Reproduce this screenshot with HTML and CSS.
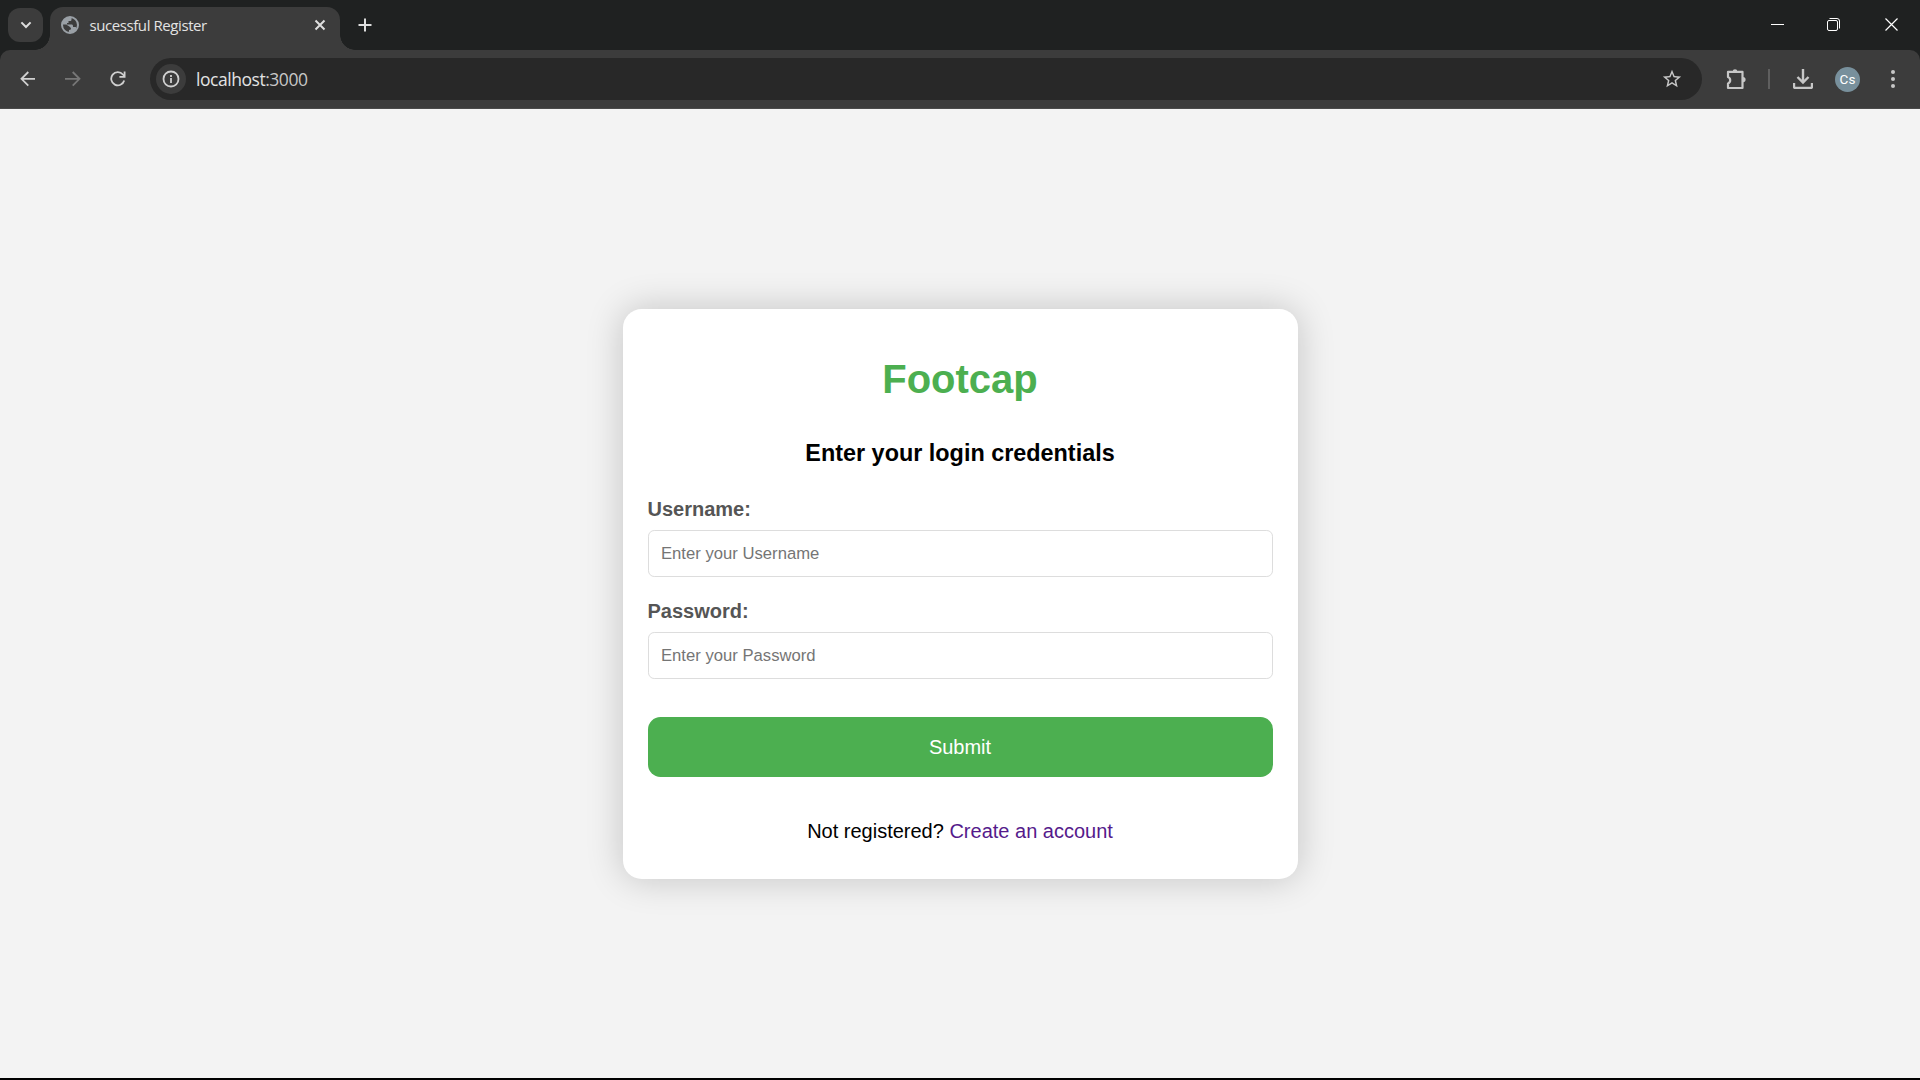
FILE: index.html
```html
<!DOCTYPE html>
<html lang="en">
<head>
<meta charset="utf-8">
<title>sucessful Register</title>
<link rel="stylesheet" href="styles.css">
</head>
<body>
<header class="browser">
  <div class="tabstrip">
    <div class="tab-search"><svg width="12" height="8" viewBox="0 0 12 8"><path d="M1.400 1.400 6 6l4.600-4.600" class="line bold"/></svg></div>
    <div class="tab">
      <svg class="globe" width="18" height="18" viewBox="0 0 18 18"><circle cx="9" cy="9" r="8" fill="none" stroke="#9aa0a6" stroke-width="2"/><path fill="#9aa0a6" d="M1 8.500C1.500 4 5 1 9 1h1.500v2.500c0 1-.7 1.500-1.500 1.500H7.500v2H6v1.500h4.500c1 0 1.500.7 1.500 1.500v1h2c1 0 1.500.6 1.700 1.500L13 16l-5 1v-3c2 0 2.500-1 1.500-2.500-1-1.300-2.500-1.500-4-3z"/></svg>
      <span class="tab-title">sucessful Register</span>
      <svg class="tab-close" width="12" height="12" viewBox="0 0 12 12"><path d="m1.500 1.500 9 9m0-9-9 9" class="line bold"/></svg>
    </div>
    <svg class="new-tab" width="14" height="14" viewBox="0 0 14 14"><path d="M7 .5v13M.5 7h13" class="line bold"/></svg>
    <div class="window-controls">
      <svg width="13" height="14" viewBox="0 0 13 14"><path d="M0 6.500h13" stroke="#fff"/></svg>
      <svg width="13" height="13" viewBox="0 0 13 13"><rect x=".5" y="2.500" width="10" height="10" rx="1.500" fill="none" stroke="#fff"/><path d="M2.500.5H10a2.500 2.500 0 0 1 2.500 2.500v7.500" fill="none" stroke="#fff"/></svg>
      <svg width="13" height="13" viewBox="0 0 13 13"><path d="m.5.5 12 12m0-12-12 12" stroke="#fff" stroke-width="1.200"/></svg>
    </div>
  </div>
  <div class="toolbar">
    <svg class="nav-icon" width="16" height="16" viewBox="0 0 16 16"><path d="M15 7.800H2M8.300 1 1.500 7.800l6.800 6.800" class="line"/></svg>
    <svg class="nav-icon dim" width="16" height="16" viewBox="0 0 16 16"><path d="M0 7.800H14M7.700 1 14.500 7.800l-6.800 6.800" class="line"/></svg>
    <svg class="nav-icon" width="16" height="16" viewBox="0 0 16 16"><path d="M14.200 9.500A6.600 6.600 0 1 1 12.900 3.500L14.500 5.200M14.600.6v5.200H9.400" class="line"/></svg>
    <div class="omnibox">
      <span class="site-info"><svg width="18" height="18" viewBox="0 0 18 18"><circle cx="9" cy="9" r="7.500" class="line"/><path d="M9 8v5M9 5v1.900" class="line"/></svg></span>
      <span class="url">localhost<span class="port">:3000</span></span>
      <svg class="star" width="22" height="22" viewBox="0 0 24 24"><path fill="#c7c7c7" d="m22 9.240-7.190-.620L12 2 9.190 8.630 2 9.240l5.460 4.730L5.820 21 12 17.270 18.180 21l-1.630-7.030L22 9.240zM12 15.400l-3.760 2.270 1-4.280-3.320-2.880 4.380-.380L12 6.100l1.710 4.040 4.380.380-3.320 2.880 1 4.280L12 15.400z"/></svg>
    </div>
    <svg class="puzzle" width="22" height="22" viewBox="0 0 22 22"><path d="M3 3.800h14.500v16.200H3v-4.500a3.500 3.500 0 0 0 0-6.500z" class="line" stroke-linejoin="round"/><path fill="#c7c7c7" d="M7.700 3.500a2.300 2.300 0 0 1 4.600 0zM18 9a2.600 2.600 0 0 1 0 5.200z"/></svg>
    <span class="separator"></span>
    <svg class="download" width="20" height="20" viewBox="0 0 20 20"><path d="M10 0v13M4.500 8 10 13.500 15.500 8M1 14v3.500a1.500 1.500 0 0 0 1.500 1.500h15a1.500 1.500 0 0 0 1.500-1.500V14" class="line heavy"/></svg>
    <span class="avatar">Cs</span>
    <svg class="menu" width="4" height="20" viewBox="0 0 4 20"><g fill="#c7c7c7"><circle cx="2" cy="3" r="2"/><circle cx="2" cy="10" r="2"/><circle cx="2" cy="17" r="2"/></g></svg>
  </div>
</header>
<main class="page">
  <section class="card">
    <h1 class="brand">Footcap</h1>
    <h3 class="prompt">Enter your login credentials</h3>
    <form class="login">
      <label class="label" for="username">Username:</label>
      <input class="field" id="username" type="text" placeholder="Enter your Username">
      <label class="label" for="password">Password:</label>
      <input class="field" id="password" type="password" placeholder="Enter your Password">
      <button class="submit" type="button">Submit</button>
    </form>
    <p class="signup">Not registered? <a href="#">Create an account</a></p>
  </section>
</main>
</body>
</html>
```

FILE: styles.css
```css
* { box-sizing: border-box; }
body {
  margin: 0;
  height: 1080px;
  display: flex;
  flex-direction: column;
  overflow: hidden;
  background: #f3f3f3;
  border-bottom: 2px solid #000;
  font-family: "Liberation Sans", Arial, sans-serif;
}
svg { display: block; flex: none; }
.line { fill: none; stroke: #d0d0d0; stroke-width: 1.8; }
.bold { stroke: #dedede; stroke-width: 2; }
.heavy { stroke-width: 2.4; }
.browser { font-family: "Open Sans", "Segoe UI", sans-serif; color: #e3e3e3; background: #1f2121; }
.tabstrip { height: 50px; display: flex; align-items: flex-start; padding-left: 8px; }
.tab-search {
  width: 35px; height: 34px; margin-top: 8px;
  border-radius: 12px; background: #3c3c3c;
  display: flex; align-items: center; justify-content: center;
}
.tab {
  position: relative;
  width: 290px; height: 43px; margin: 7px 0 0 7px;
  padding: 0 14px 7px 11px;
  display: flex; align-items: center;
  border-radius: 13px 13px 0 0; background: #3c3c3c;
}
.tab::before, .tab::after {
  content: ""; position: absolute; bottom: 0; width: 15px; height: 15px;
}
.tab::before { right: 100%; background: radial-gradient(circle at 0 0, transparent 14.500px, #3c3c3c 15px); }
.tab::after { left: 100%; background: radial-gradient(circle at 100% 0, transparent 14.500px, #3c3c3c 15px); }
.tab-title { margin-left: 10.5px; font-size: 15px; line-height: 20px; letter-spacing: -0.42px; white-space: nowrap; }
.tab-close { margin-left: auto; }
.new-tab { margin: 18px 0 0 18px; }
.window-controls { margin: 18px 22px 0 auto; display: flex; gap: 43px; }
.window-controls svg:last-child { margin-left: 2px; }
.toolbar {
  height: 59px; display: flex; align-items: center;
  padding: 0 25.500px 0 20px;
  border-radius: 10px 10px 0 0;
  background: #3c3c3c; border-bottom: 1px solid #4a4a4a;
}
.nav-icon { margin-right: 29px; }
.dim .line { stroke: #777; }
.omnibox {
  width: 1552px; height: 42px; margin-left: -5px; padding: 0 19px 0 6px;
  display: flex; align-items: center;
  border-radius: 21px; background: #282828;
}
.site-info {
  width: 30px; height: 30px; border-radius: 50%; background: #3c3c3c;
  display: flex; align-items: center; justify-content: center;
}
.url { margin-left: 10px; font-size: 17.500px; line-height: 24px; letter-spacing: -0.46px; }
.port { color: #c7c7c7; }
.star { margin-left: auto; }
.puzzle { margin-left: 23px; }
.puzzle .line { stroke: #c7c7c7; stroke-width: 2.2; }
.download .line { stroke: #c7c7c7; }
.separator { width: 2px; height: 20px; margin-left: 21px; background: #5f5f5f; }
.download { margin-left: 23px; }
.avatar {
  width: 25px; height: 25px; margin-left: 22px; border-radius: 50%;
  background: #78909c; color: #fff; font: 13.500px/24px Roboto, sans-serif; text-align: center;
}
.menu { margin-left: auto; }
.page { flex: 1; display: flex; align-items: center; justify-content: center; padding-top: 1px; }
.card {
  width: 675px; height: 570px; padding: 0 25px;
  border-radius: 18.750px; background: #fff;
  box-shadow: 0 0 37.500px rgba(0, 0, 0, 0.2);
  text-align: center;
}
.brand { margin: 47px 0 0; font-size: 40px; line-height: 46px; color: #4caf50; }
.prompt { margin: 38px 0 0; font-size: 23.400px; line-height: 26px; }
.login { display: flex; flex-direction: column; margin-top: 32px; text-align: left; }
.label { font-size: 20px; line-height: 23px; font-weight: bold; color: #555; }
.field {
  width: 625px; height: 47px; margin: 9px 0 23px; padding: 0 12.500px;
  border: 1px solid #ddd; border-radius: 6.250px;
  font: 16.667px "Liberation Sans", Arial, sans-serif; background: #fff;
}
.field::placeholder { color: #757575; }
.submit {
  height: 60px; margin-top: 15px; border: 0; border-radius: 12.500px;
  background: #4caf50; color: #fff; font: 20px "Liberation Sans", Arial, sans-serif;
}
.signup { margin: 43px 0 0; font-size: 20px; line-height: 23px; }
.signup a { color: #551a8b; text-decoration: none; }
```
